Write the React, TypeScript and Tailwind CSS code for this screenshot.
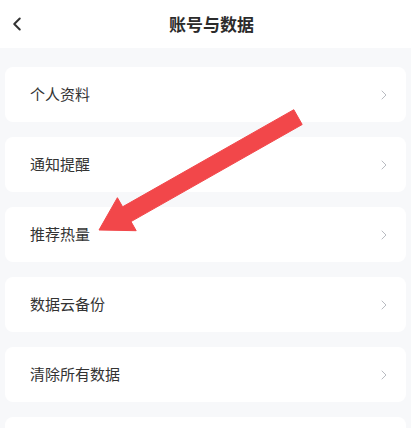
import { ChevronLeft, ChevronRight } from "lucide-react";

const items = ["个人资料", "通知提醒", "推荐热量", "数据云备份", "清除所有数据", ""];

export default function App() {
  return (
    <div
      className="relative h-[428px] w-[411px] overflow-hidden bg-[#f7f8fa]"
      style={{ fontFamily: '"Noto Sans CJK SC", "Noto Sans", sans-serif' }}
    >
      {/* Header */}
      <header className="relative flex h-12 items-center justify-center bg-white pl-3">
        <ChevronLeft className="absolute left-[6px] h-[22px] w-[22px] text-[#333]" strokeWidth={2.2} />
        <h1 className="text-[17px] font-bold text-[#2b2b2b]">账号与数据</h1>
      </header>

      {/* List */}
      <div className="flex flex-col gap-[15px] px-[5px] pt-[19px]">
        {items.map((label, i) => (
          <div
            key={i}
            className="flex h-[55px] shrink-0 items-center justify-between rounded-lg bg-white pl-[25px] pr-[14px]"
          >
            <span className="text-[15px] text-[#333]">{label}</span>
            {label && <ChevronRight className="h-[16px] w-[16px] text-[#b9bcc2]" strokeWidth={1.5} />}
          </div>
        ))}
      </div>

      {/* Red annotation arrow */}
      <svg className="pointer-events-none absolute left-0 top-0" width="411" height="428" viewBox="0 0 411 428">
        <polygon
          points="99,230 117.4,197.7 122.6,206.8 293.8,109.7 302.2,124.5 131,221.6 136.2,230.7"
          fill="#f2474a"
          stroke="#f2474a"
          strokeWidth="1"
          strokeLinejoin="round"
        />
      </svg>
    </div>
  );
}
